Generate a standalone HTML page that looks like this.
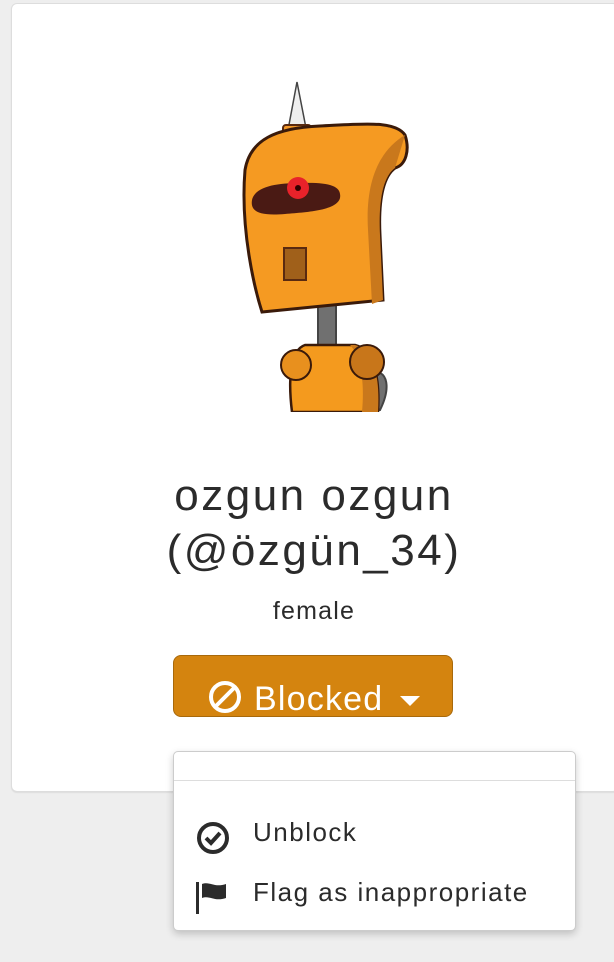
<!DOCTYPE html>
<html><head><meta charset="utf-8"><style>
body{margin:0;width:614px;height:962px;background:#eeeeee;font-family:"Liberation Sans",sans-serif;position:relative;overflow:hidden;color:#333}
.card{position:absolute;left:11px;top:3px;width:606px;height:787px;background:#fff;border:1px solid #ddd;border-radius:6px;box-shadow:0 1px 1px #ddd}
.name{position:absolute;left:0;width:628px;top:468px;text-align:center;font-size:44px;line-height:55px;letter-spacing:2.5px;color:#2b2b2b}
.g{position:absolute;left:0;width:628px;top:597px;text-align:center;font-size:25px;letter-spacing:1.2px;color:#2b2b2b}
.btn{position:absolute;left:173px;top:655px;width:278px;height:60px;background:#d4840f;border:1px solid #a8690b;border-radius:8px;color:#fff;font-size:34px;letter-spacing:1.2px}
.dd{position:absolute;left:173px;top:751px;width:401px;height:178px;background:#fff;border:1px solid #ccc;border-radius:5px;box-shadow:0 3px 8px rgba(0,0,0,.2)}
.it{position:absolute;left:79px;font-size:26px;letter-spacing:1.5px;color:#2b2b2b}
</style></head><body>
<div class="card"></div>
<svg style="position:absolute;left:230px;top:80px" width="190" height="332" viewBox="230 80 190 332">
<path d="M288 130 L297 82 L306 128 Z" fill="#eee" stroke="#444" stroke-width="1.5"/>
<rect x="283" y="125" width="28" height="10" rx="3" fill="#f49a2a" stroke="#5a2a10" stroke-width="2"/>
<path d="M380 410 C390 390 388 375 378 372 L372 378 C380 385 378 398 372 410 Z" fill="#707070" stroke="#444" stroke-width="2"/>
<rect x="318" y="300" width="18" height="55" fill="#707070" stroke="#444" stroke-width="2"/>
<path d="M292 412 C288 380 290 350 305 345 L355 345 C375 350 380 380 378 412 Z" fill="#f49a1e" stroke="#3a1a0a" stroke-width="2.5"/>
<path d="M355 345 C375 350 380 380 378 412 L362 412 C365 380 360 355 350 345 Z" fill="#c9781c"/>
<circle cx="296" cy="365" r="15" fill="#e8901e" stroke="#3a1a0a" stroke-width="2"/>
<circle cx="367" cy="362" r="17" fill="#c8761a" stroke="#3a1a0a" stroke-width="2"/>
<path d="M245 170 C250 140 275 128 320 126 C360 124 395 120 405 135 C410 150 406 165 395 168 C385 175 378 195 380 235 L383 300 L262 312 C255 290 240 230 245 170 Z" fill="#f59a22" stroke="#3a1a0a" stroke-width="3"/>
<path d="M395 168 C385 175 378 195 380 235 L383 300 L372 304 L368 230 C365 180 380 150 405 135 Z" fill="#c9781c"/>
<path d="M252 200 C255 187 275 183 300 183 C330 182 342 186 340 198 C337 210 310 212 285 214 C260 216 250 212 252 200 Z" fill="#4a1a14"/>
<circle cx="298" cy="188" r="11" fill="#e8222a"/><circle cx="298" cy="188" r="3" fill="#300"/>
<rect x="284" y="248" width="22" height="32" fill="#a0601a" stroke="#5a2a10" stroke-width="2"/>
</svg>
<div class="name">ozgun ozgun<br>(@özgün_34)</div>
<div class="g">female</div>
<div class="btn">
<svg style="position:absolute;left:34px;top:24px" width="34" height="34" viewBox="0 0 34 34"><circle cx="17" cy="17" r="14" fill="none" stroke="#fff" stroke-width="4"/><line x1="8" y1="26" x2="26" y2="8" stroke="#fff" stroke-width="4"/></svg>
<span style="position:absolute;left:80px;top:24px">Blocked</span>
<svg style="position:absolute;left:226px;top:40px" width="20" height="12"><path d="M0 0 L20 0 L10 10 Z" fill="#fff"/></svg>
</div>
<div class="dd">
<div style="position:absolute;left:0;right:0;top:28px;border-top:1px solid #ddd"></div>
<svg style="position:absolute;left:22px;top:69px" width="36" height="36" viewBox="0 0 36 36"><circle cx="17" cy="17" r="14" fill="none" stroke="#2b2b2b" stroke-width="4"/><path d="M10 17 L15 22 L24 12" fill="none" stroke="#2b2b2b" stroke-width="4"/></svg>
<span class="it" style="top:65px">Unblock</span>
<svg style="position:absolute;left:22px;top:128px" width="34" height="36"><rect x="0" y="2" width="3" height="32" fill="#2b2b2b"/><path d="M6 4 C14 1 18 8 30 4 L30 18 C18 22 14 15 6 18 Z" fill="#2b2b2b"/></svg>
<span class="it" style="top:125px">Flag as inappropriate</span>
</div>
</body></html>
